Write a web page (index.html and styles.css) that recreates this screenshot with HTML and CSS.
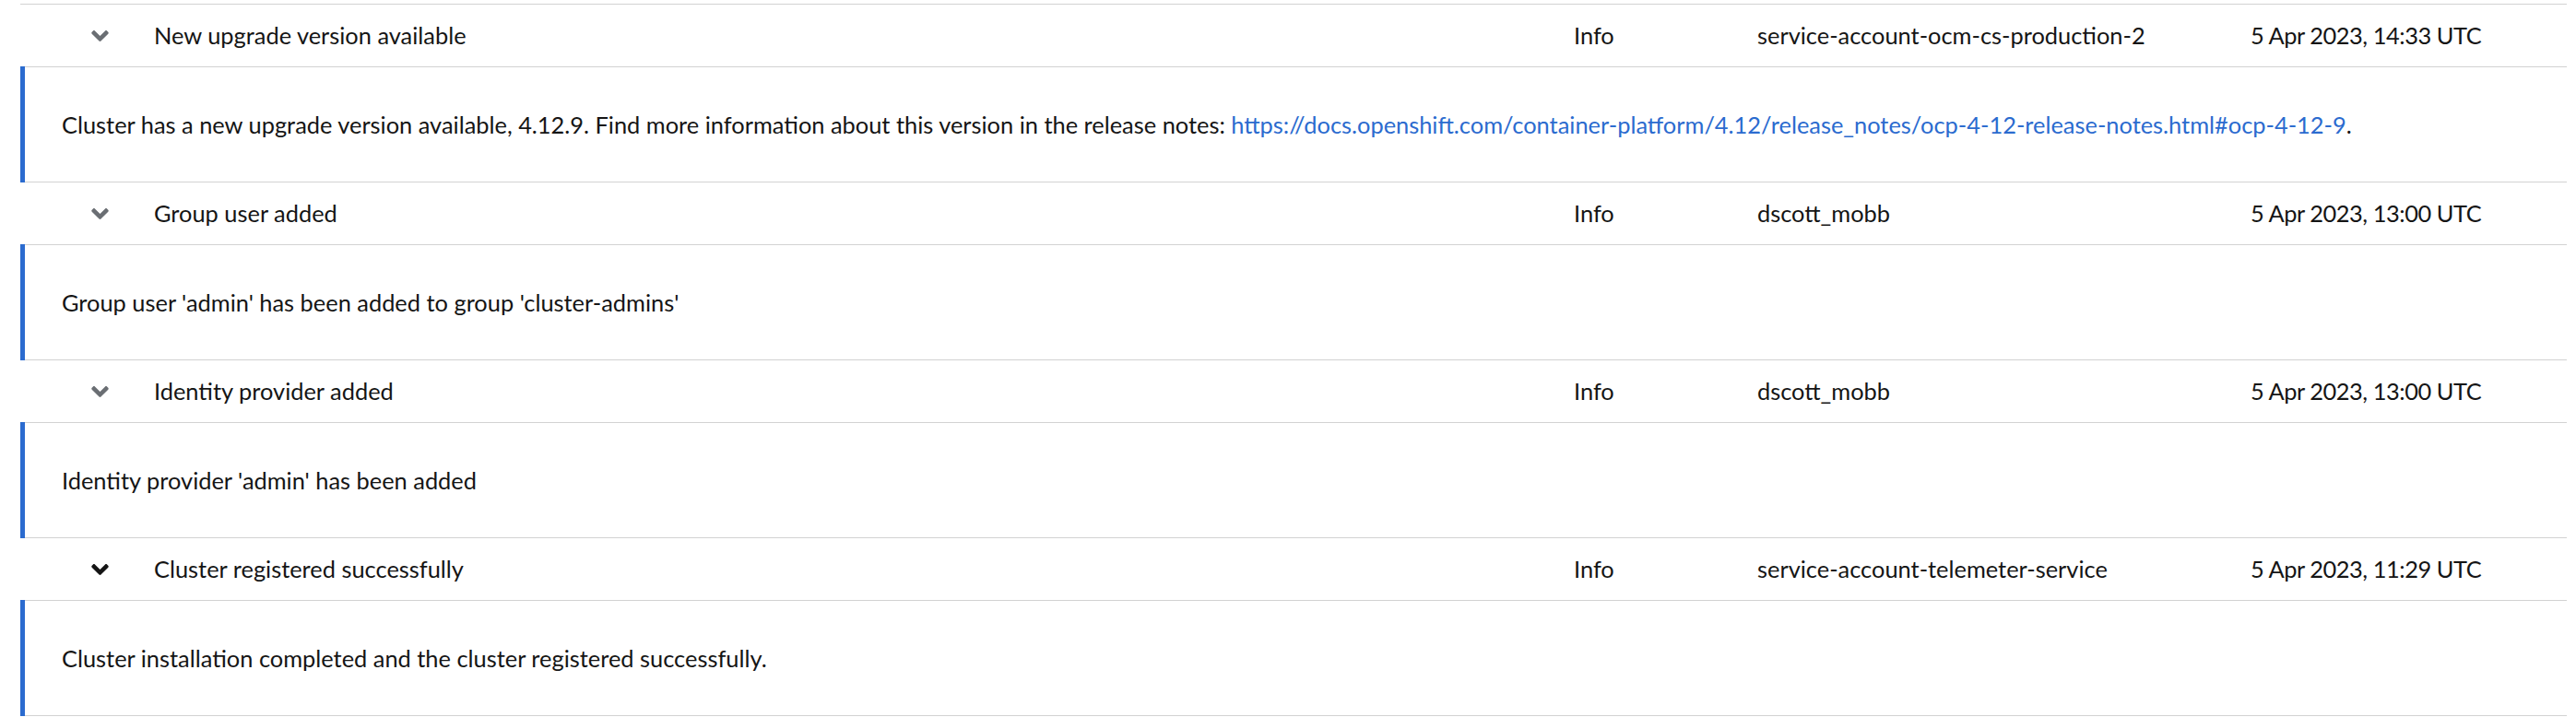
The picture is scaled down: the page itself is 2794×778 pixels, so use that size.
FILE: index.html
```html
<!DOCTYPE html>
<html lang="en">
<head>
<meta charset="utf-8">
<title>Cluster history</title>
<link rel="stylesheet" href="styles.css">
</head>
<body>
<div class="page">
  <div class="table">
    <div class="row head first">
      <div class="cell toggle"><svg class="chev" viewBox="0 152 320 208" width="19" height="12"><path d="M143 352.3L7 216.3c-9.4-9.4-9.4-24.6 0-33.9l22.6-22.6c9.4-9.4 24.6-9.4 33.9 0l96.4 96.4 96.4-96.4c9.4-9.4 24.6-9.4 33.9 0l22.6 22.6c9.4 9.4 9.4 24.6 0 33.9l-136 136c-9.2 9.4-24.4 9.4-33.8 0z"/></svg></div>
      <div class="cell">New upgrade version available</div>
      <div class="cell">Info</div>
      <div class="cell">service-account-ocm-cs-production-2</div>
      <div class="cell date">5 Apr 2023, 14:33 UTC</div>
    </div>
    <div class="row detail">
      <div class="cell">Cluster has a new upgrade version available, 4.12.9. Find more information about this version in the release notes: <a class="link" href="#">https://docs.openshift.com/container-platform/4.12/release_notes/ocp-4-12-release-notes.html#ocp-4-12-9</a>.</div>
    </div>
    <div class="row head">
      <div class="cell toggle"><svg class="chev" viewBox="0 152 320 208" width="19" height="12"><path d="M143 352.3L7 216.3c-9.4-9.4-9.4-24.6 0-33.9l22.6-22.6c9.4-9.4 24.6-9.4 33.9 0l96.4 96.4 96.4-96.4c9.4-9.4 24.6-9.4 33.9 0l22.6 22.6c9.4 9.4 9.4 24.6 0 33.9l-136 136c-9.2 9.4-24.4 9.4-33.8 0z"/></svg></div>
      <div class="cell">Group user added</div>
      <div class="cell">Info</div>
      <div class="cell">dscott_mobb</div>
      <div class="cell date">5 Apr 2023, 13:00 UTC</div>
    </div>
    <div class="row detail">
      <div class="cell">Group user 'admin' has been added to group 'cluster-admins'</div>
    </div>
    <div class="row head">
      <div class="cell toggle"><svg class="chev" viewBox="0 152 320 208" width="19" height="12"><path d="M143 352.3L7 216.3c-9.4-9.4-9.4-24.6 0-33.9l22.6-22.6c9.4-9.4 24.6-9.4 33.9 0l96.4 96.4 96.4-96.4c9.4-9.4 24.6-9.4 33.9 0l22.6 22.6c9.4 9.4 9.4 24.6 0 33.9l-136 136c-9.2 9.4-24.4 9.4-33.8 0z"/></svg></div>
      <div class="cell">Identity provider added</div>
      <div class="cell">Info</div>
      <div class="cell">dscott_mobb</div>
      <div class="cell date">5 Apr 2023, 13:00 UTC</div>
    </div>
    <div class="row detail">
      <div class="cell">Identity provider 'admin' has been added</div>
    </div>
    <div class="row head">
      <div class="cell toggle"><svg class="chev dark" viewBox="0 152 320 208" width="19" height="12"><path d="M143 352.3L7 216.3c-9.4-9.4-9.4-24.6 0-33.9l22.6-22.6c9.4-9.4 24.6-9.4 33.9 0l96.4 96.4 96.4-96.4c9.4-9.4 24.6-9.4 33.9 0l22.6 22.6c9.4 9.4 9.4 24.6 0 33.9l-136 136c-9.2 9.4-24.4 9.4-33.8 0z"/></svg></div>
      <div class="cell">Cluster registered successfully</div>
      <div class="cell">Info</div>
      <div class="cell">service-account-telemeter-service</div>
      <div class="cell date">5 Apr 2023, 11:29 UTC</div>
    </div>
    <div class="row detail">
      <div class="cell">Cluster installation completed and the cluster registered successfully.</div>
    </div>
  </div>
</div>
</body>
</html>
```
FILE: styles.css
```css
html, body {
  margin: 0;
  padding: 0;
  background: #ffffff;
}

body {
  font-family: "Lato", "Noto Sans", sans-serif;
  font-size: 25.4px;
  color: #151515;
}

.page {
  padding: 4px 10px 0 22px;
}

.table {
  display: flex;
  flex-direction: column;
}

.row {
  border-bottom: 1px solid #d2d2d2;
}

.row.first {
  border-top: 1px solid #d2d2d2;
}

.head {
  display: grid;
  grid-template-columns: 145px 1540px 199px 535px 1fr;
  align-items: center;
  height: 67px;
}

.cell {
  white-space: nowrap;
  line-height: 1.2;
}

.date {
  letter-spacing: -0.45px;
}

.toggle {
  padding-left: 77px;
  display: flex;
  align-items: center;
}

.chev {
  display: block;
  fill: #6a6e73;
}

.chev.dark {
  fill: #151515;
}

.detail {
  position: relative;
  height: 124px;
  display: flex;
  align-items: center;
  padding-left: 45px;
}

.detail::before {
  content: "";
  position: absolute;
  left: 0;
  top: -1px;
  bottom: -1px;
  width: 5px;
  background: #2b6bcf;
}

.link {
  color: #2b6bcf;
  text-decoration: none;
}
```
